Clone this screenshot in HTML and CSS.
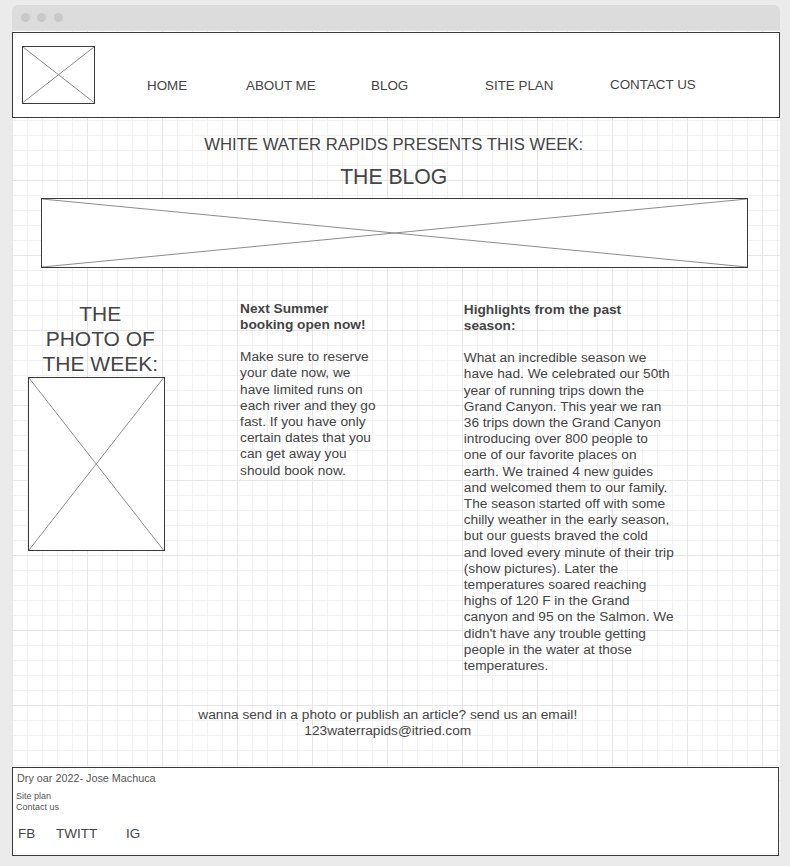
FILE: index.html
```html
<!DOCTYPE html>
<html lang="en">
<head>
<meta charset="UTF-8">
<title>White Water Rapids - The Blog</title>
<link rel="stylesheet" href="styles.css">
</head>
<body>

<div class="window">
    <!-- browser chrome -->
    <div class="titlebar">
        <span class="dot"></span>
        <span class="dot"></span>
        <span class="dot"></span>
    </div>

    <div class="canvas">

        <!-- Header with logo and nav -->
        <div class="header">
            <div class="ph logo">
                <svg class="xlines" viewBox="0 0 100 100" preserveAspectRatio="none"><line x1="0" y1="0" x2="100" y2="100"/><line x1="100" y1="0" x2="0" y2="100"/></svg>
            </div>
            <ul class="nav">
                <li>HOME</li>
                <li>ABOUT ME</li>
                <li>BLOG</li>
                <li>SITE PLAN</li>
                <li class="nav-up">CONTACT US</li>
            </ul>
        </div>

        <h2 class="presents">WHITE WATER RAPIDS PRESENTS THIS WEEK:</h2>
        <h1 class="blog-title">THE BLOG</h1>

        <div class="ph banner">
            <svg class="xlines" viewBox="0 0 100 100" preserveAspectRatio="none"><line x1="0" y1="0" x2="100" y2="100"/><line x1="100" y1="0" x2="0" y2="100"/></svg>
        </div>

        <!-- three columns -->
        <div class="columns">
            <div class="col-photo">
                <div class="photo-title">THE PHOTO OF THE WEEK:</div>
                <div class="ph photo">
                    <svg class="xlines" viewBox="0 0 100 100" preserveAspectRatio="none"><line x1="0" y1="0" x2="100" y2="100"/><line x1="100" y1="0" x2="0" y2="100"/></svg>
                </div>
            </div>

            <div class="col-text col-booking">
                <h3>Next Summer<br>booking open now!</h3>
                <p>Make sure to reserve<br>your date now, we<br>have limited runs on<br>each river and they go<br>fast. If you have only<br>certain dates that you<br>can get away you<br>should book now.</p>
            </div>

            <div class="col-text col-season">
                <h3 class="season-head">Highlights from the past<br>season:</h3>
                <p>What an incredible season we<br>have had. We celebrated our 50th<br>year of running trips down the<br>Grand Canyon. This year we ran<br>36 trips down the Grand Canyon<br>introducing over 800 people to<br>one of our favorite places on<br>earth. We trained 4 new guides<br>and welcomed them to our family.<br>The season started off with some<br>chilly weather in the early season,<br>but our guests braved the cold<br>and loved every minute of their trip<br>(show pictures). Later the<br>temperatures soared reaching<br>highs of 120 F in the Grand<br>canyon and 95 on the Salmon. We<br>didn't have any trouble getting<br>people in the water at those<br>temperatures.</p>
            </div>
        </div>

        <p class="send">wanna send in a photo or publish an article? send us an email!<br>123waterrapids@itried.com</p>

        <!-- Footer -->
        <div class="footer">
            <div class="copy">Dry oar 2022- Jose Machuca</div>
            <div class="foot-links">
                <div>Site plan</div>
                <div>Contact us</div>
            </div>
            <div class="social">
                <span>FB</span>
                <span>TWITT</span>
                <span>IG</span>
            </div>
        </div>

    </div>
</div>

</body>
</html>
```
FILE: styles.css
```css
* {
    box-sizing: border-box;
}
body {
    margin: 0;
    background-color: #ebebeb;
    font-family: "Liberation Sans", Arial, sans-serif;
    color: #444;
}
.window {
    margin: 5px 0 0 11.5px;
    width: 768.5px;
}
.titlebar {
    height: 25px;
    background-color: #dcdcdc;
    border-radius: 6px 6px 0 0;
    display: flex;
    align-items: center;
    gap: 7.7px;
    padding-left: 9px;
}
.dot {
    width: 9px;
    height: 9px;
    border-radius: 50%;
    background-color: #c9c9c9;
}
.canvas {
    background-color: #fff;
    background-image:
        linear-gradient(#e6e6e6 1px, transparent 1px),
        linear-gradient(90deg, #e6e6e6 1px, transparent 1px),
        linear-gradient(#f1f1f1 1px, transparent 1px),
        linear-gradient(90deg, #f1f1f1 1px, transparent 1px);
    background-size: 75px 75px, 75px 75px, 15px 15px, 15px 15px;
    overflow: hidden;
}

/* placeholder boxes */
.ph {
    border: 1px solid #3a3a3a;
    background-color: #fff;
}
.xlines {
    display: block;
    width: 100%;
    height: 100%;
}
.xlines line {
    stroke: #8c8c8c;
    stroke-width: 1;
    vector-effect: non-scaling-stroke;
}

/* header */
.header {
    margin: 2px 0.5px 0 0.5px;
    height: 86px;
    border: 1px solid #3a3a3a;
    background-color: #fff;
    display: flex;
    align-items: flex-start;
}
.logo {
    width: 73px;
    height: 57.5px;
    margin: 13px 0 0 9px;
}
.nav {
    list-style: none;
    margin: 44px 0 0 52px;
    padding: 0;
    display: grid;
    grid-template-columns: 99px 125px 114px 125px auto;
    font-size: 13.4px;
    line-height: 18px;
}
.nav-up {
    margin-top: -1px;
}

/* titles */
.presents {
    margin: 17px 0 0;
    text-align: center;
    font-size: 16.7px;
    line-height: 20px;
    font-weight: normal;
    padding-right: 4px;
}
.blog-title {
    margin: 9px 0 0;
    text-align: center;
    font-size: 21.2px;
    line-height: 25px;
    font-weight: normal;
    padding-right: 4px;
}
.banner {
    margin: 8.5px 0 0 29.5px;
    width: 707px;
    height: 70px;
}

/* columns */
.columns {
    display: flex;
    align-items: flex-start;
    margin-top: 33px;
    padding-left: 16.8px;
}
.col-photo {
    width: 136.4px;
}
.photo-title {
    width: 120px;
    margin-left: 12px;
    text-align: center;
    font-size: 21px;
    line-height: 25px;
}
.photo {
    width: 136.4px;
    height: 174px;
    margin-top: 1px;
}
.col-text {
    font-size: 13.7px;
    line-height: 16.2px;
    white-space: nowrap;
}
.col-text h3 {
    margin: 0;
    font-size: 13.7px;
    line-height: 16.2px;
}
.col-text p {
    margin: 16.2px 0 0;
}
.col-booking {
    margin-left: 75.4px;
    width: 148px;
}
.col-season {
    margin-left: 75.7px;
    width: 230px;
}
.season-head {
    padding-top: 1px;
}

/* contact line */
.send {
    margin: 33px 0 0;
    padding-right: 16px;
    text-align: center;
    font-size: 13.7px;
    line-height: 16.2px;
}

/* footer */
.footer {
    margin: 27.5px 1.3px 0 0;
    height: 89px;
    border: 1px solid #3a3a3a;
    background-color: #fff;
    padding: 4px 0 0 3.5px;
}
.copy {
    font-size: 10.8px;
    line-height: 13px;
    margin-left: 1px;
    color: #555;
}
.foot-links {
    margin-top: 5.5px;
    font-size: 9px;
    line-height: 11px;
    color: #555;
}
.social {
    display: grid;
    grid-template-columns: 38px 70px auto;
    margin: 13px 0 0 2px;
    font-size: 13.5px;
    line-height: 16px;
}
```
